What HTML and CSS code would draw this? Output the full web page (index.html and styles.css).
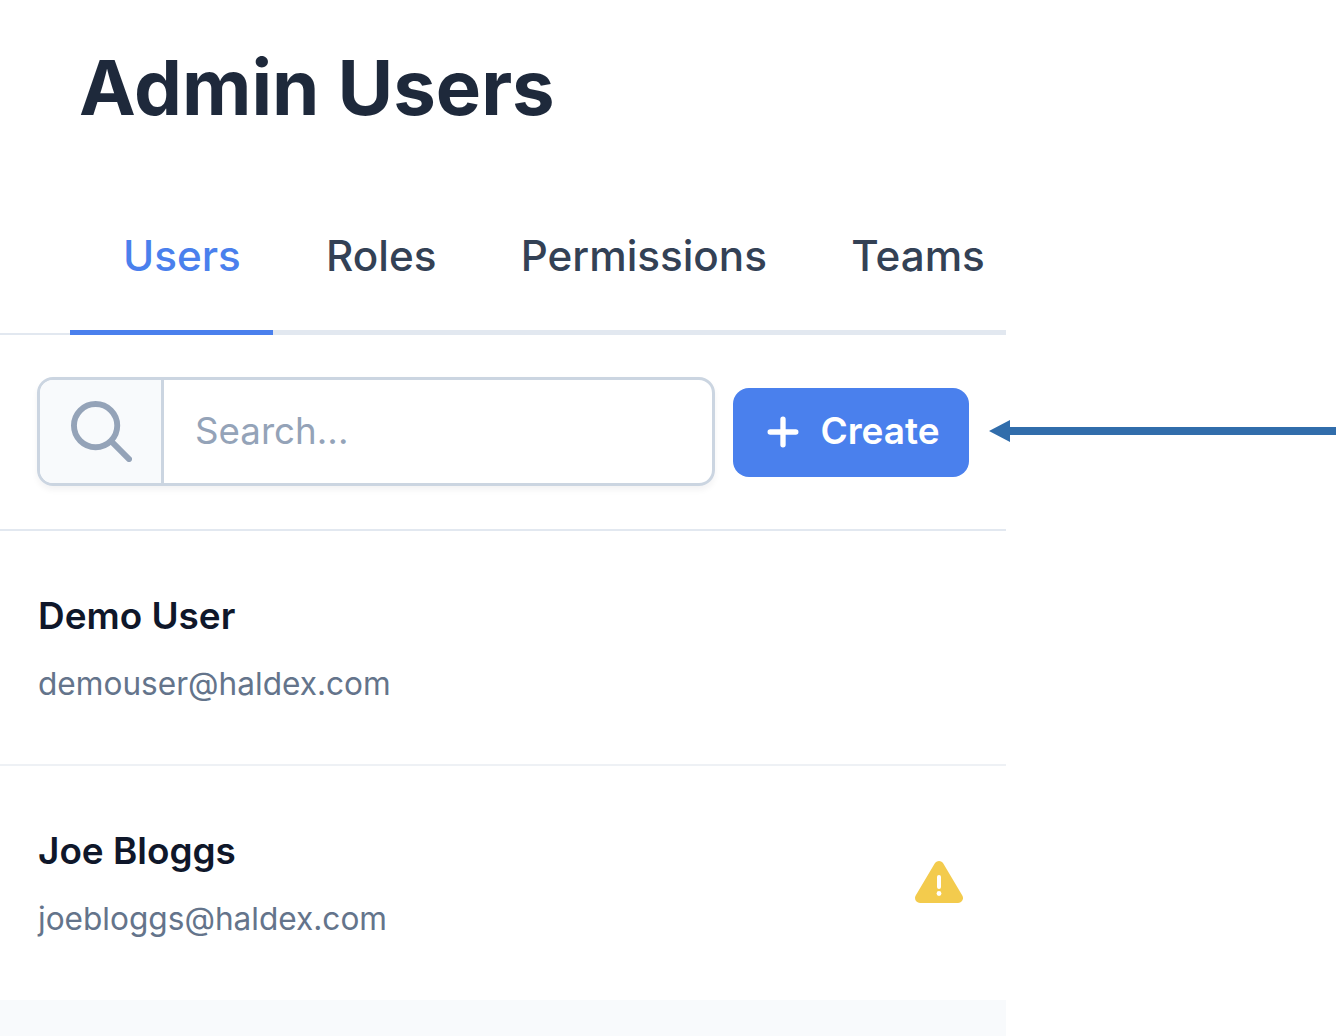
FILE: index.html
```html
<!DOCTYPE html>
<html lang="en">
<head>
<meta charset="utf-8">
<title>Admin Users</title>
<link rel="stylesheet" href="styles.css">
</head>
<body>
<main class="panel">
  <h1 class="title">Admin Users</h1>
  <nav class="tabs">
    <a class="tab tab-active">Users</a>
    <a class="tab">Roles</a>
    <a class="tab">Permissions</a>
    <a class="tab tab-last">Teams</a>
  </nav>
  <div class="toolbar">
    <div class="search">
      <span class="search-addon">
        <svg class="search-icon" viewBox="0 0 62 62" fill="none" stroke="#94a3b8" stroke-width="6" stroke-linecap="round">
          <circle cx="25" cy="25" r="22"/>
          <path d="M41 41 59 59"/>
        </svg>
      </span>
      <span class="search-input">Search...</span>
    </div>
    <button class="create">
      <svg class="plus-icon" viewBox="0 0 30 30" fill="none" stroke="#fff" stroke-width="5" stroke-linecap="round">
        <path d="M15 3v24M3 15h24"/>
      </svg>
      <span>Create</span>
    </button>
  </div>
  <ul class="users">
    <li class="user">
      <div>
        <div class="user-name">Demo User</div>
        <div class="user-email">demouser@haldex.com</div>
      </div>
    </li>
    <li class="user">
      <div>
        <div class="user-name">Joe Bloggs</div>
        <div class="user-email">joebloggs@haldex.com</div>
      </div>
      <svg class="warn-icon" viewBox="0 0 50 44">
        <path d="M25 6 44 38H6Z" fill="#f3cb4d" stroke="#f3cb4d" stroke-width="10" stroke-linejoin="round"/>
        <path d="M25 17v10" stroke="#fff" stroke-width="4" stroke-linecap="round"/>
        <circle cx="25" cy="33.5" r="2.4" fill="#fff"/>
      </svg>
    </li>
  </ul>
  <div class="footer"></div>
</main>
<svg class="arrow" viewBox="0 0 347 22">
  <path d="M0 11 21 0V7H347V15H21V22Z" fill="#316dab"/>
</svg>
</body>
</html>
```
FILE: styles.css
```css
* { box-sizing: border-box; }
html, body { margin: 0; height: 100%; }
body {
  background: #fff;
  font-family: Inter, "Liberation Sans", sans-serif;
  overflow: hidden;
  position: relative;
}
.panel {
  width: 1006px;
  height: 1036px;
  display: flex;
  flex-direction: column;
}
.title {
  margin: 0;
  height: 173px;
  padding: 41px 0 0 79px;
  font-size: 76.1px;
  line-height: 92px;
  font-weight: 700;
  color: #1e293b;
}
.tabs {
  height: 162px;
  display: flex;
  padding-left: 70px;
  box-shadow: inset 0 -2px 0 #e2e8f0;
}
.tab {
  height: 162px;
  padding: 60px 31.3px 0 53px;
  font-size: 42.2px;
  line-height: 46px;
  font-weight: 500;
  color: #334155;
  border-bottom: 5px solid #e2e8f0;
  flex: none;
}
.tab-last { flex: 1; padding-right: 0; }
.tab-active {
  padding-right: 32.3px;
  color: #4a80ed;
  border-bottom-color: #4a80ed;
}
.toolbar {
  height: 196px;
  display: flex;
  align-items: center;
  padding: 0 37px;
  gap: 18px;
  border-bottom: 2px solid #e2e8f0;
}
.search {
  width: 678px;
  height: 109px;
  margin-top: -1px;
  display: flex;
  border: 3px solid #cbd5e1;
  border-radius: 16px;
  box-shadow: 0 4px 6px rgba(15, 23, 42, .05);
  overflow: hidden;
}
.search-addon {
  width: 124px;
  padding-left: 2px;
  background: #f8fafc;
  border-right: 3px solid #cbd5e1;
  display: flex;
  align-items: center;
  justify-content: center;
  flex: none;
}
.search-icon { width: 61px; height: 61px; }
.search-input {
  padding: 0 0 3px 31px;
  display: flex;
  align-items: center;
  font-size: 36.7px;
  color: #94a3b8;
}
.create {
  width: 236px;
  height: 89px;
  border: 0;
  border-radius: 16px;
  background: #4a80ed;
  color: #fff;
  font: 600 37px Inter, "Liberation Sans", sans-serif;
  display: flex;
  align-items: center;
  justify-content: center;
  gap: 21px;
  padding: 0 0 4px 5px;
}
.plus-icon { width: 32px; height: 32px; margin-top: 4px; }
.users { list-style: none; margin: 0; padding: 0; }
.user {
  height: 235px;
  padding: 4px 42px 0 38px;
  display: flex;
  align-items: center;
  justify-content: space-between;
  border-bottom: 2px solid #eef1f5;
}
.user:last-child { height: 234px; border-bottom: 0; }
.user-name {
  font-size: 36.9px;
  line-height: 44px;
  font-weight: 600;
  color: #0f172a;
}
.user-email {
  margin-top: 24px;
  font-size: 31.6px;
  line-height: 44px;
  color: #64748b;
}
.warn-icon { width: 50px; height: 44px; flex: none; margin-top: -6px; }
.footer { flex: 1; background: #f8fafc; }
.arrow {
  position: absolute;
  left: 989px;
  top: 420px;
  width: 347px;
  height: 22px;
}
```
